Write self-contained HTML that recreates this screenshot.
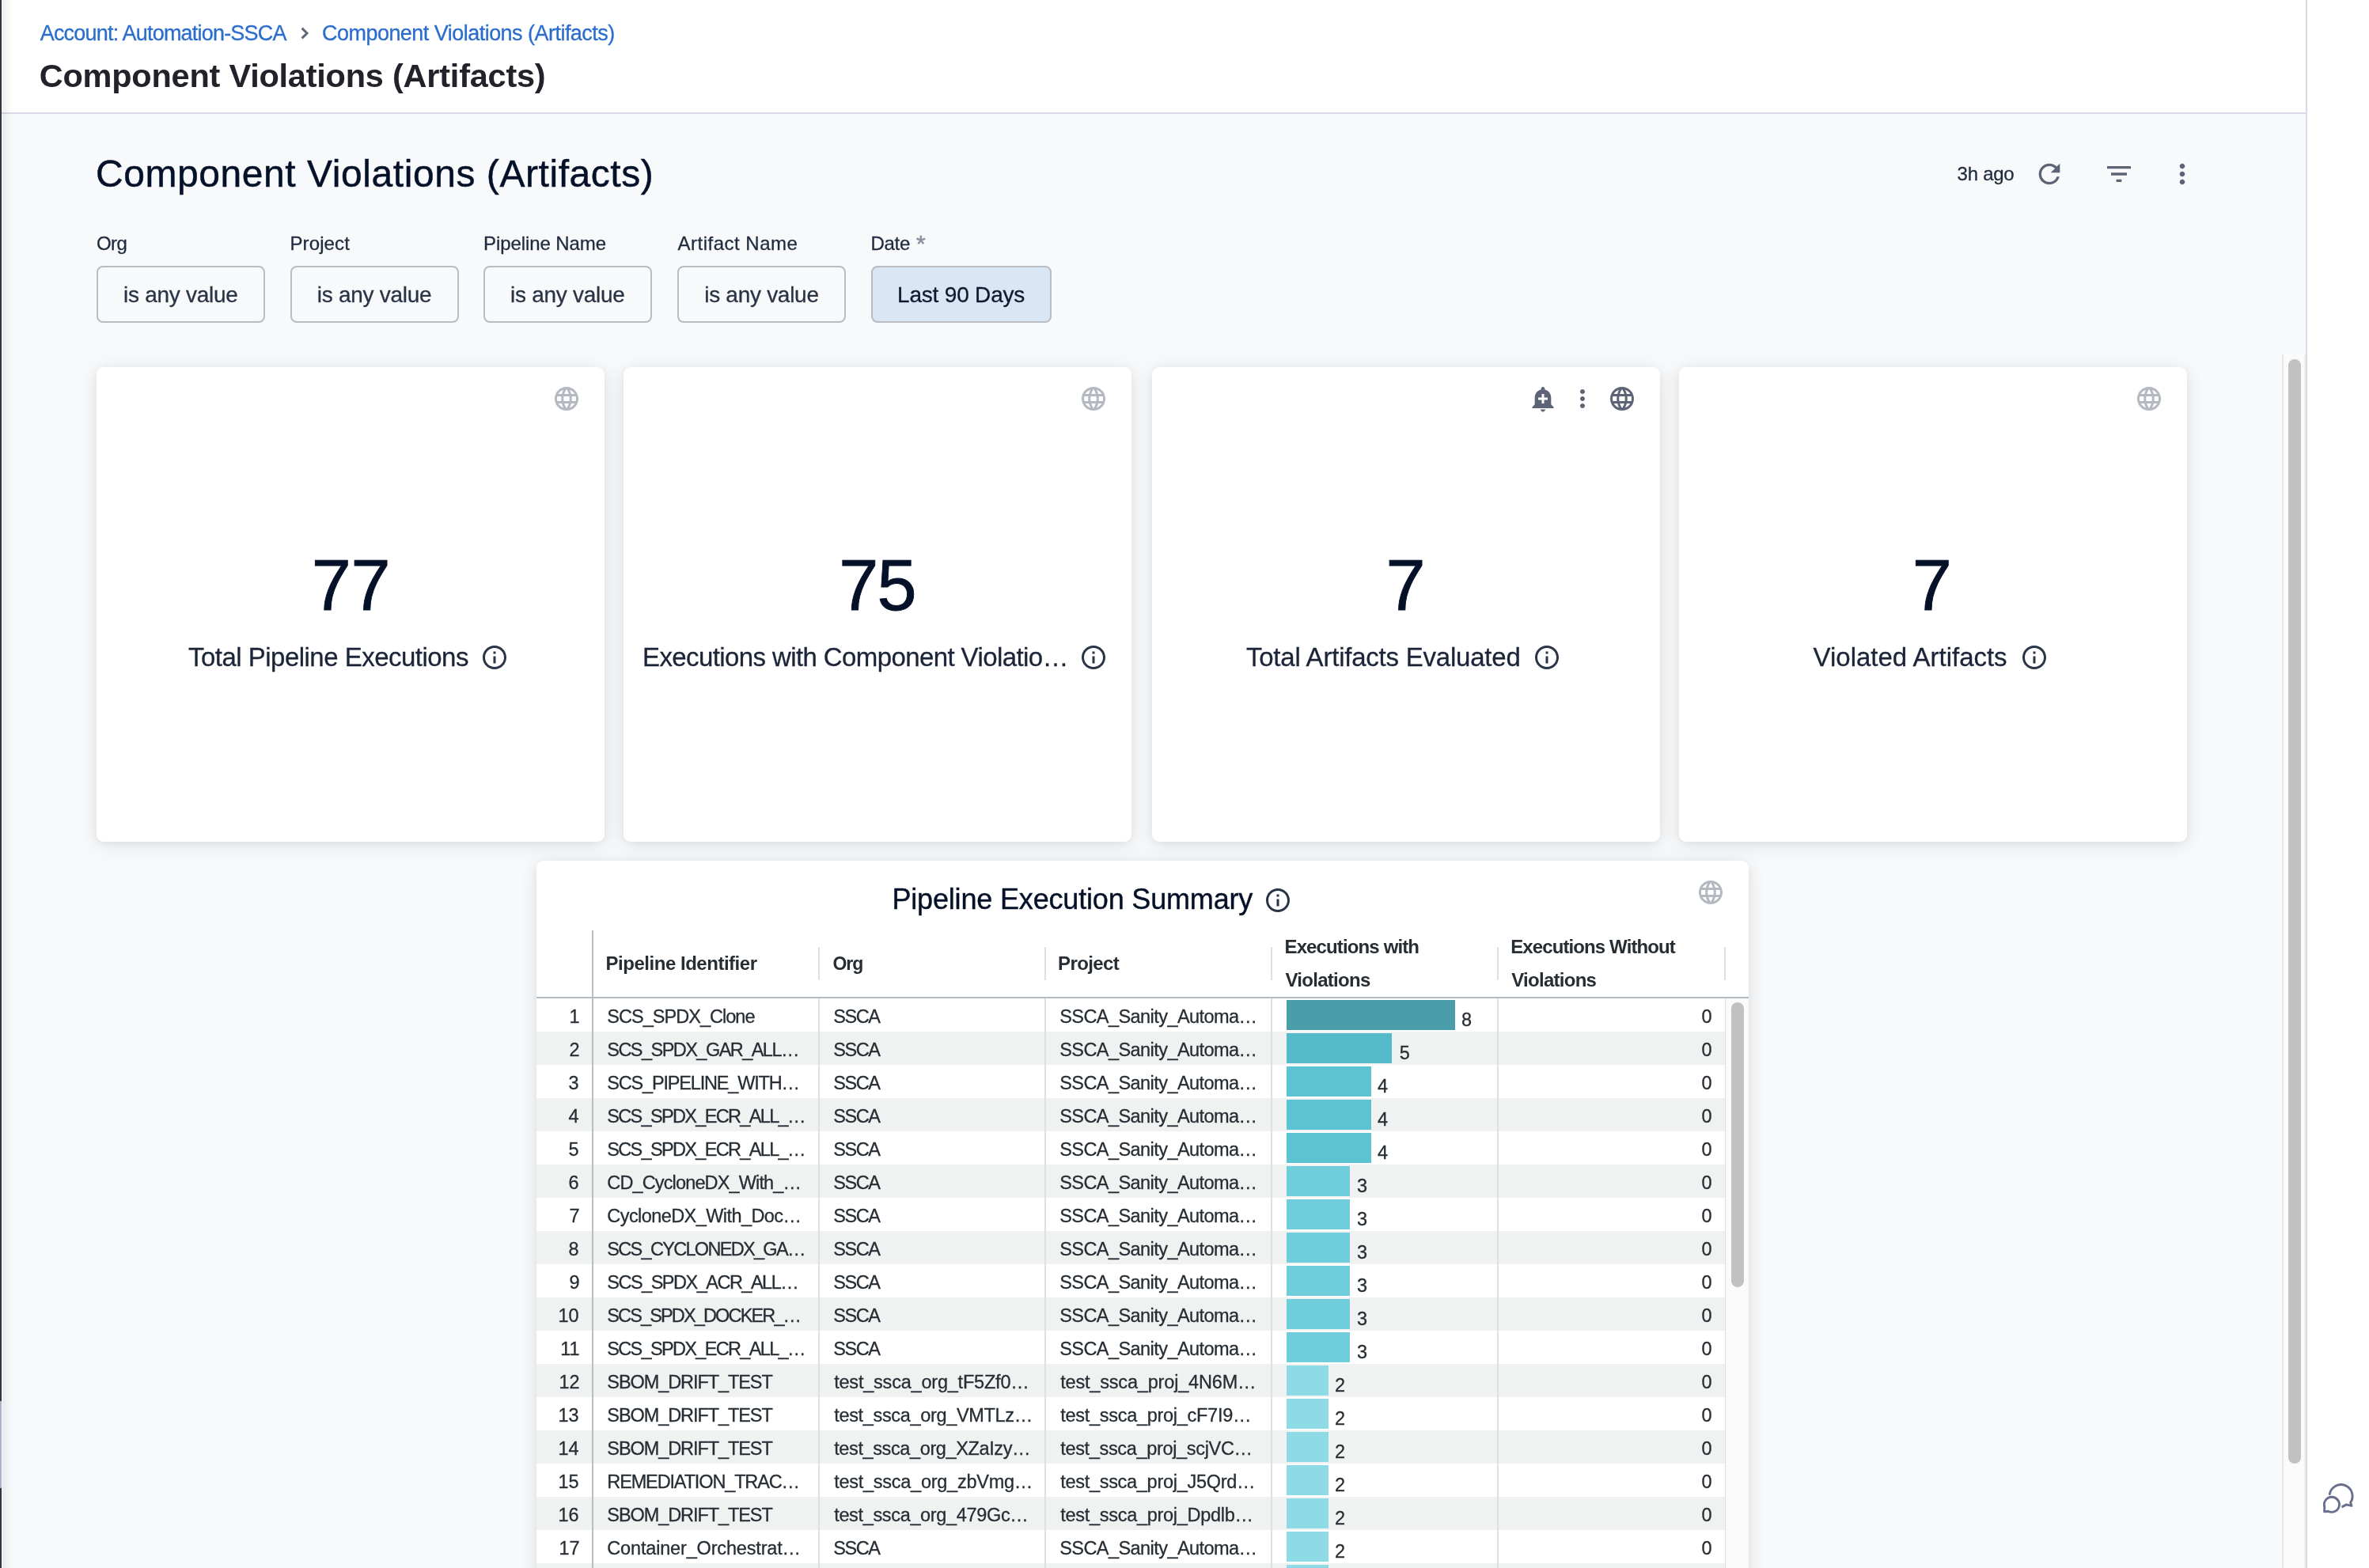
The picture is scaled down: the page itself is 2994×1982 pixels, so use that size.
<!DOCTYPE html>
<html lang="en"><head><meta charset="utf-8"><title>Component Violations (Artifacts)</title>
<style>
html,body{margin:0;padding:0}
body{width:2994px;height:1982px;overflow:hidden;background:#fff;position:relative;font-family:"Liberation Sans",sans-serif}
div,span,svg{position:absolute;box-sizing:border-box}
.t{white-space:nowrap;line-height:1;-webkit-text-stroke:.3px}
.card{background:#fff;border-radius:9px;box-shadow:0 4px 24px rgba(0,0,0,.10),0 2px 8px rgba(0,0,0,.045)}
.btn{top:336px;height:72px;border:2px solid #b9bcc1;border-radius:8px}
.row{left:678px;width:1502px;height:42px;background:#f0f2f2}
.bar{height:38px;left:1626px}
.vl{width:2px;background:#dcdfe4}
</style></head><body>

<div style="left:0;top:0;width:2916px;height:1982px;background:#f8f9fb"></div>
<div style="left:0;top:0;width:2916px;height:142px;background:#fff"></div>
<div style="left:0;top:142px;width:2916px;height:2px;background:#d9dae6"></div>
<div style="left:3px;top:0;width:13px;height:1982px;background:linear-gradient(90deg,rgba(20,20,45,.065),rgba(20,20,45,0))"></div>
<div style="left:0;top:0;width:1px;height:1982px;background:#383947"></div>
<div style="left:1px;top:0;width:1px;height:1982px;background:#2b2b38"></div>
<div style="left:0;top:1771px;width:2px;height:110px;background:#b0afc6"></div>
<div style="left:2914px;top:0;width:2px;height:1982px;background:#d9dae6"></div>
<div style="left:2916px;top:0;width:78px;height:1982px;background:#fff"></div>
<svg class="i" style="left:370px;top:30px" width="24" height="24" viewBox="370 30 24 24"><path d="M381.6 35.6L388 42L381.6 48.4" fill="none" stroke="#5c6a7c" stroke-width="3"/></svg>
<div style="left:2884px;top:448px;width:30px;height:1534px;background:#fafafa;border-left:2px solid #e8e8e8;border-right:2px solid #efefef"></div>
<div style="left:2892px;top:454px;width:16px;height:1396px;background:#c1c1c1;border-radius:8px"></div>
<div class="btn" style="left:122px;width:213px"></div>
<div class="btn" style="left:367px;width:213px"></div>
<div class="btn" style="left:611px;width:213px"></div>
<div class="btn" style="left:856px;width:213px"></div>
<div class="btn" style="left:1101px;width:228px;background:#d9e6f4"></div>
<div class="card" style="left:122px;top:464px;width:642px;height:600px"></div>
<div class="card" style="left:788px;top:464px;width:642px;height:600px"></div>
<div class="card" style="left:1456px;top:464px;width:642px;height:600px"></div>
<div class="card" style="left:2122px;top:464px;width:642px;height:600px"></div>
<div class="card" style="left:678px;top:1088px;width:1532px;height:920px"></div>
<div class="row" style="top:1304px"></div>
<div class="row" style="top:1388px"></div>
<div class="row" style="top:1472px"></div>
<div class="row" style="top:1556px"></div>
<div class="row" style="top:1640px"></div>
<div class="row" style="top:1724px"></div>
<div class="row" style="top:1808px"></div>
<div class="row" style="top:1892px"></div>
<div class="row" style="top:1976px"></div>
<div class="bar" style="top:1264px;width:213px;background:#4a9ea9"></div>
<div class="bar" style="top:1306px;width:133px;background:#55bac9"></div>
<div class="bar" style="top:1348px;width:107px;background:#5bc3d2"></div>
<div class="bar" style="top:1390px;width:107px;background:#5bc3d2"></div>
<div class="bar" style="top:1432px;width:107px;background:#5bc3d2"></div>
<div class="bar" style="top:1474px;width:80px;background:#70cedc"></div>
<div class="bar" style="top:1516px;width:80px;background:#70cedc"></div>
<div class="bar" style="top:1558px;width:80px;background:#70cedc"></div>
<div class="bar" style="top:1600px;width:80px;background:#70cedc"></div>
<div class="bar" style="top:1642px;width:80px;background:#70cedc"></div>
<div class="bar" style="top:1684px;width:80px;background:#70cedc"></div>
<div class="bar" style="top:1726px;width:53px;background:#8fdbe5"></div>
<div class="bar" style="top:1768px;width:53px;background:#8fdbe5"></div>
<div class="bar" style="top:1810px;width:53px;background:#8fdbe5"></div>
<div class="bar" style="top:1852px;width:53px;background:#8fdbe5"></div>
<div class="bar" style="top:1894px;width:53px;background:#8fdbe5"></div>
<div class="bar" style="top:1936px;width:53px;background:#8fdbe5"></div>
<div class="bar" style="top:1978px;width:53px;background:#8fdbe5"></div>
<div style="left:748px;top:1176px;width:2px;height:806px;background:#b9bec5"></div>
<div class="vl" style="left:1034px;top:1197px;height:42px"></div>
<div class="vl" style="left:1034px;top:1262px;height:720px"></div>
<div class="vl" style="left:1320px;top:1197px;height:42px"></div>
<div class="vl" style="left:1320px;top:1262px;height:720px"></div>
<div class="vl" style="left:1606px;top:1197px;height:42px"></div>
<div class="vl" style="left:1606px;top:1262px;height:720px"></div>
<div class="vl" style="left:1892px;top:1197px;height:42px"></div>
<div class="vl" style="left:1892px;top:1262px;height:720px"></div>
<div class="vl" style="left:2179px;top:1197px;height:42px"></div>
<div class="vl" style="left:2180px;top:1262px;height:720px"></div>
<div style="left:678px;top:1260px;width:1532px;height:2px;background:#b3bac2"></div>
<div style="left:2181px;top:1262px;width:29px;height:720px;background:#fafafa"></div>
<div style="left:2188px;top:1267px;width:16px;height:360px;background:#c1c1c1;border-radius:8px"></div>
<svg class="i" style="left:2924px;top:1860px" width="64" height="70" viewBox="0 0 64 70" fill="none" stroke="#6a6f8d" stroke-width="2.9" stroke-linecap="round" stroke-linejoin="round"><path d="M20.3 28.6A14.5 14.5 0 1 1 46.6 39.2L48 43.4L41.4 41.9L36.6 44.4"/><path d="M13.8 44.6A9.55 9.55 0 1 1 18.4 50.2L13.6 50.9Z"/></svg>
<svg class="i" style="left:2570.1px;top:199.9px" width="40" height="40" viewBox="0 0 24 24"><path fill="#5c6475" d="M17.65 6.35A7.958 7.958 0 0 0 12 4c-4.42 0-7.99 3.58-7.99 8s3.57 8 7.99 8c3.73 0 6.84-2.55 7.73-6h-2.08A5.99 5.99 0 0 1 12 18c-3.31 0-6-2.69-6-6s2.69-6 6-6c1.66 0 3.14.69 4.22 1.78L13 11h7V4l-2.35 2.35z"/></svg>
<svg class="i" style="left:2658.0px;top:199.9px" width="40" height="40" viewBox="0 0 24 24"><path fill="#5c6475" d="M10 18h4v-2h-4v2zM3 6v2h18V6H3zm3 7h12v-2H6v2z"/></svg>
<svg class="i" style="left:2738.0px;top:199.9px" width="40" height="40" viewBox="0 0 24 24"><path fill="#5c6475" d="M12 8c1.1 0 2-.9 2-2s-.9-2-2-2-2 .9-2 2 .9 2 2 2zm0 2c-1.1 0-2 .9-2 2s.9 2 2 2 2-.9 2-2-.9-2-2-2zm0 6c-1.1 0-2 .9-2 2s.9 2 2 2 2-.9 2-2-.9-2-2-2z"/></svg>
<svg class="i" style="left:698.0px;top:485.8px" width="36" height="36" viewBox="0 0 24 24"><path fill="#b3b8c1" d="M11.99 2C6.47 2 2 6.48 2 12s4.47 10 9.99 10C17.52 22 22 17.52 22 12S17.52 2 11.99 2zm6.93 6h-2.95c-.32-1.25-.78-2.45-1.38-3.56 1.84.63 3.37 1.91 4.33 3.56zM12 4.04c.83 1.2 1.48 2.53 1.91 3.96h-3.82c.43-1.43 1.08-2.76 1.91-3.96zM4.26 14C4.1 13.36 4 12.69 4 12s.1-1.36.26-2h3.38c-.08.66-.14 1.32-.14 2 0 .68.06 1.34.14 2H4.26zm.82 2h2.95c.32 1.25.78 2.45 1.38 3.56-1.84-.63-3.37-1.9-4.33-3.56zm2.95-8H5.08c.96-1.66 2.49-2.93 4.33-3.56C8.81 5.55 8.35 6.75 8.03 8zM12 19.96c-.83-1.2-1.48-2.53-1.91-3.96h3.82c-.43 1.43-1.08 2.76-1.91 3.96zM14.34 14H9.66c-.09-.66-.16-1.32-.16-2 0-.68.07-1.35.16-2h4.68c.09.65.16 1.32.16 2 0 .68-.07 1.34-.16 2zm.25 5.56c.6-1.11 1.06-2.31 1.38-3.56h2.95c-.96 1.65-2.49 2.93-4.33 3.56zM16.36 14c.08-.66.14-1.32.14-2 0-.68-.06-1.34-.14-2h3.38c.16.64.26 1.31.26 2s-.1 1.36-.26 2h-3.38z"/></svg>
<svg class="i" style="left:1364.0px;top:485.8px" width="36" height="36" viewBox="0 0 24 24"><path fill="#b3b8c1" d="M11.99 2C6.47 2 2 6.48 2 12s4.47 10 9.99 10C17.52 22 22 17.52 22 12S17.52 2 11.99 2zm6.93 6h-2.95c-.32-1.25-.78-2.45-1.38-3.56 1.84.63 3.37 1.91 4.33 3.56zM12 4.04c.83 1.2 1.48 2.53 1.91 3.96h-3.82c.43-1.43 1.08-2.76 1.91-3.96zM4.26 14C4.1 13.36 4 12.69 4 12s.1-1.36.26-2h3.38c-.08.66-.14 1.32-.14 2 0 .68.06 1.34.14 2H4.26zm.82 2h2.95c.32 1.25.78 2.45 1.38 3.56-1.84-.63-3.37-1.9-4.33-3.56zm2.95-8H5.08c.96-1.66 2.49-2.93 4.33-3.56C8.81 5.55 8.35 6.75 8.03 8zM12 19.96c-.83-1.2-1.48-2.53-1.91-3.96h3.82c-.43 1.43-1.08 2.76-1.91 3.96zM14.34 14H9.66c-.09-.66-.16-1.32-.16-2 0-.68.07-1.35.16-2h4.68c.09.65.16 1.32.16 2 0 .68-.07 1.34-.16 2zm.25 5.56c.6-1.11 1.06-2.31 1.38-3.56h2.95c-.96 1.65-2.49 2.93-4.33 3.56zM16.36 14c.08-.66.14-1.32.14-2 0-.68-.06-1.34-.14-2h3.38c.16.64.26 1.31.26 2s-.1 1.36-.26 2h-3.38z"/></svg>
<svg class="i" style="left:1931.8px;top:486.0px" width="36" height="36" viewBox="0 0 24 24"><path fill="#5c6475" d="M10.01 21.01c0 1.1.89 1.99 1.99 1.99s1.99-.89 1.99-1.99h-3.98zm8.87-4.19V11c0-3.25-2.25-5.97-5.29-6.69v-.72C13.59 2.71 12.88 2 12 2s-1.59.71-1.59 1.59v.72C7.37 5.03 5.12 7.75 5.12 11v5.82L3 18.94V20h18v-1.06l-2.12-2.12zM16 13.01h-3v3h-2v-3H8V11h3V8h2v3h3v2.01z"/></svg>
<svg class="i" style="left:1982.0px;top:486.0px" width="36" height="36" viewBox="0 0 24 24"><path fill="#5c6475" d="M12 8c1.1 0 2-.9 2-2s-.9-2-2-2-2 .9-2 2 .9 2 2 2zm0 2c-1.1 0-2 .9-2 2s.9 2 2 2 2-.9 2-2-.9-2-2-2zm0 6c-1.1 0-2 .9-2 2s.9 2 2 2 2-.9 2-2-.9-2-2-2z"/></svg>
<svg class="i" style="left:2031.9px;top:485.9px" width="36" height="36" viewBox="0 0 24 24"><path fill="#5c6475" d="M11.99 2C6.47 2 2 6.48 2 12s4.47 10 9.99 10C17.52 22 22 17.52 22 12S17.52 2 11.99 2zm6.93 6h-2.95c-.32-1.25-.78-2.45-1.38-3.56 1.84.63 3.37 1.91 4.33 3.56zM12 4.04c.83 1.2 1.48 2.53 1.91 3.96h-3.82c.43-1.43 1.08-2.76 1.91-3.96zM4.26 14C4.1 13.36 4 12.69 4 12s.1-1.36.26-2h3.38c-.08.66-.14 1.32-.14 2 0 .68.06 1.34.14 2H4.26zm.82 2h2.95c.32 1.25.78 2.45 1.38 3.56-1.84-.63-3.37-1.9-4.33-3.56zm2.95-8H5.08c.96-1.66 2.49-2.93 4.33-3.56C8.81 5.55 8.35 6.75 8.03 8zM12 19.96c-.83-1.2-1.48-2.53-1.91-3.96h3.82c-.43 1.43-1.08 2.76-1.91 3.96zM14.34 14H9.66c-.09-.66-.16-1.32-.16-2 0-.68.07-1.35.16-2h4.68c.09.65.16 1.32.16 2 0 .68-.07 1.34-.16 2zm.25 5.56c.6-1.11 1.06-2.31 1.38-3.56h2.95c-.96 1.65-2.49 2.93-4.33 3.56zM16.36 14c.08-.66.14-1.32.14-2 0-.68-.06-1.34-.14-2h3.38c.16.64.26 1.31.26 2s-.1 1.36-.26 2h-3.38z"/></svg>
<svg class="i" style="left:2697.8px;top:485.9px" width="36" height="36" viewBox="0 0 24 24"><path fill="#b3b8c1" d="M11.99 2C6.47 2 2 6.48 2 12s4.47 10 9.99 10C17.52 22 22 17.52 22 12S17.52 2 11.99 2zm6.93 6h-2.95c-.32-1.25-.78-2.45-1.38-3.56 1.84.63 3.37 1.91 4.33 3.56zM12 4.04c.83 1.2 1.48 2.53 1.91 3.96h-3.82c.43-1.43 1.08-2.76 1.91-3.96zM4.26 14C4.1 13.36 4 12.69 4 12s.1-1.36.26-2h3.38c-.08.66-.14 1.32-.14 2 0 .68.06 1.34.14 2H4.26zm.82 2h2.95c.32 1.25.78 2.45 1.38 3.56-1.84-.63-3.37-1.9-4.33-3.56zm2.95-8H5.08c.96-1.66 2.49-2.93 4.33-3.56C8.81 5.55 8.35 6.75 8.03 8zM12 19.96c-.83-1.2-1.48-2.53-1.91-3.96h3.82c-.43 1.43-1.08 2.76-1.91 3.96zM14.34 14H9.66c-.09-.66-.16-1.32-.16-2 0-.68.07-1.35.16-2h4.68c.09.65.16 1.32.16 2 0 .68-.07 1.34-.16 2zm.25 5.56c.6-1.11 1.06-2.31 1.38-3.56h2.95c-.96 1.65-2.49 2.93-4.33 3.56zM16.36 14c.08-.66.14-1.32.14-2 0-.68-.06-1.34-.14-2h3.38c.16.64.26 1.31.26 2s-.1 1.36-.26 2h-3.38z"/></svg>
<svg class="i" style="left:2143.8px;top:1109.6px" width="36" height="36" viewBox="0 0 24 24"><path fill="#b3b8c1" d="M11.99 2C6.47 2 2 6.48 2 12s4.47 10 9.99 10C17.52 22 22 17.52 22 12S17.52 2 11.99 2zm6.93 6h-2.95c-.32-1.25-.78-2.45-1.38-3.56 1.84.63 3.37 1.91 4.33 3.56zM12 4.04c.83 1.2 1.48 2.53 1.91 3.96h-3.82c.43-1.43 1.08-2.76 1.91-3.96zM4.26 14C4.1 13.36 4 12.69 4 12s.1-1.36.26-2h3.38c-.08.66-.14 1.32-.14 2 0 .68.06 1.34.14 2H4.26zm.82 2h2.95c.32 1.25.78 2.45 1.38 3.56-1.84-.63-3.37-1.9-4.33-3.56zm2.95-8H5.08c.96-1.66 2.49-2.93 4.33-3.56C8.81 5.55 8.35 6.75 8.03 8zM12 19.96c-.83-1.2-1.48-2.53-1.91-3.96h3.82c-.43 1.43-1.08 2.76-1.91 3.96zM14.34 14H9.66c-.09-.66-.16-1.32-.16-2 0-.68.07-1.35.16-2h4.68c.09.65.16 1.32.16 2 0 .68-.07 1.34-.16 2zm.25 5.56c.6-1.11 1.06-2.31 1.38-3.56h2.95c-.96 1.65-2.49 2.93-4.33 3.56zM16.36 14c.08-.66.14-1.32.14-2 0-.68-.06-1.34-.14-2h3.38c.16.64.26 1.31.26 2s-.1 1.36-.26 2h-3.38z"/></svg>
<svg class="i" style="left:606.9px;top:812.9px" width="36" height="36" viewBox="0 0 24 24"><path fill="#2a3447" d="M11 7h2v2h-2zm0 4h2v6h-2zm1-9C6.48 2 2 6.48 2 12s4.48 10 10 10 10-4.48 10-10S17.52 2 12 2zm0 18c-4.41 0-8-3.59-8-8s3.59-8 8-8 8 3.59 8 8-3.59 8-8 8z"/></svg>
<svg class="i" style="left:1364.0px;top:812.9px" width="36" height="36" viewBox="0 0 24 24"><path fill="#2a3447" d="M11 7h2v2h-2zm0 4h2v6h-2zm1-9C6.48 2 2 6.48 2 12s4.48 10 10 10 10-4.48 10-10S17.52 2 12 2zm0 18c-4.41 0-8-3.59-8-8s3.59-8 8-8 8 3.59 8 8-3.59 8-8 8z"/></svg>
<svg class="i" style="left:1936.8px;top:812.9px" width="36" height="36" viewBox="0 0 24 24"><path fill="#2a3447" d="M11 7h2v2h-2zm0 4h2v6h-2zm1-9C6.48 2 2 6.48 2 12s4.48 10 10 10 10-4.48 10-10S17.52 2 12 2zm0 18c-4.41 0-8-3.59-8-8s3.59-8 8-8 8 3.59 8 8-3.59 8-8 8z"/></svg>
<svg class="i" style="left:2552.6px;top:812.9px" width="36" height="36" viewBox="0 0 24 24"><path fill="#2a3447" d="M11 7h2v2h-2zm0 4h2v6h-2zm1-9C6.48 2 2 6.48 2 12s4.48 10 10 10 10-4.48 10-10S17.52 2 12 2zm0 18c-4.41 0-8-3.59-8-8s3.59-8 8-8 8 3.59 8 8-3.59 8-8 8z"/></svg>
<svg class="i" style="left:1597.0px;top:1120.2px" width="36" height="36" viewBox="0 0 24 24"><path fill="#2a3447" d="M11 7h2v2h-2zm0 4h2v6h-2zm1-9C6.48 2 2 6.48 2 12s4.48 10 10 10 10-4.48 10-10S17.52 2 12 2zm0 18c-4.41 0-8-3.59-8-8s3.59-8 8-8 8 3.59 8 8-3.59 8-8 8z"/></svg>
<div style="left:0;top:0;width:2994px;height:1982px;will-change:transform">
<span class="t" style="left:50.7px;top:29px;font-size:27px;color:#2a6dcd;letter-spacing:-0.80px;">Account: Automation-SSCA</span>
<span class="t" style="left:407.0px;top:29px;font-size:27px;color:#2a6dcd;letter-spacing:-0.53px;">Component Violations (Artifacts)</span>
<span class="t" style="left:49.7px;top:75px;font-size:41.5px;color:#22222a;letter-spacing:-0.23px;font-weight:700;-webkit-text-stroke:0;">Component Violations (Artifacts)</span>
<span class="t" style="left:121.0px;top:196px;font-size:48px;color:#051129;letter-spacing:0.56px;-webkit-text-stroke:0.45px;">Component Violations (Artifacts)</span>
<span class="t" style="left:2473.6px;top:208px;font-size:24px;color:#1f2a3c;letter-spacing:-0.27px;">3h ago</span>
<span class="t" style="left:122.0px;top:296px;font-size:24px;color:#1f2a3c;letter-spacing:-0.63px;">Org</span>
<span class="t" style="left:366.5px;top:296px;font-size:24px;color:#1f2a3c;letter-spacing:0.10px;">Project</span>
<span class="t" style="left:611.0px;top:296px;font-size:24px;color:#1f2a3c;letter-spacing:-0.09px;">Pipeline Name</span>
<span class="t" style="left:856.5px;top:296px;font-size:24px;color:#1f2a3c;letter-spacing:0.50px;">Artifact Name</span>
<span class="t" style="left:1100.5px;top:296px;font-size:24px;color:#1f2a3c;letter-spacing:-0.28px;">Date</span>
<span class="t" style="left:1158.0px;top:293px;font-size:30px;color:#8a919d;-webkit-text-stroke:0.6px;">*</span>
<span class="t" style="left:156.0px;top:359px;font-size:28px;color:#2a3344;letter-spacing:-0.28px;">is any value</span>
<span class="t" style="left:400.8px;top:359px;font-size:28px;color:#2a3344;letter-spacing:-0.28px;">is any value</span>
<span class="t" style="left:645.0px;top:359px;font-size:28px;color:#2a3344;letter-spacing:-0.28px;">is any value</span>
<span class="t" style="left:890.2px;top:359px;font-size:28px;color:#2a3344;letter-spacing:-0.28px;">is any value</span>
<span class="t" style="left:1134.0px;top:359px;font-size:28px;color:#0c1a30;letter-spacing:-0.19px;">Last 90 Days</span>
<span class="t" style="left:393.8px;top:695px;font-size:90px;color:#051129;letter-spacing:-0.45px;-webkit-text-stroke:0.9px;">77</span>
<span class="t" style="left:238.0px;top:814px;font-size:33px;color:#1c2538;letter-spacing:-0.52px;">Total Pipeline Executions</span>
<span class="t" style="left:1060.3px;top:695px;font-size:90px;color:#051129;letter-spacing:-1.95px;-webkit-text-stroke:0.9px;">75</span>
<span class="t" style="left:812.0px;top:814px;font-size:33px;color:#1c2538;letter-spacing:-0.60px;">Executions with Component Violatio…</span>
<span class="t" style="left:1751.6px;top:695px;font-size:90px;color:#051129;-webkit-text-stroke:0.9px;">7</span>
<span class="t" style="left:1574.9px;top:814px;font-size:33px;color:#1c2538;letter-spacing:-0.22px;">Total Artifacts Evaluated</span>
<span class="t" style="left:2416.8px;top:695px;font-size:90px;color:#051129;-webkit-text-stroke:0.9px;">7</span>
<span class="t" style="left:2291.6px;top:814px;font-size:33px;color:#1c2538;letter-spacing:-0.01px;">Violated Artifacts</span>
<span class="t" style="left:1127.4px;top:1119px;font-size:36px;color:#051129;letter-spacing:-0.17px;-webkit-text-stroke:0.4px;">Pipeline Execution Summary</span>
<span class="t" style="left:765.6px;top:1206px;font-size:24px;color:#262d33;letter-spacing:-0.48px;font-weight:700;-webkit-text-stroke:0;">Pipeline Identifier</span>
<span class="t" style="left:1052.4px;top:1207px;font-size:23.0px;color:#262d33;letter-spacing:-1.03px;font-weight:700;-webkit-text-stroke:0;">Org</span>
<span class="t" style="left:1337.1px;top:1206px;font-size:24px;color:#262d33;letter-spacing:-0.61px;font-weight:700;-webkit-text-stroke:0;">Project</span>
<span class="t" style="left:1623.5px;top:1185px;font-size:24px;color:#262d33;letter-spacing:-0.87px;font-weight:700;-webkit-text-stroke:0;">Executions with</span>
<span class="t" style="left:1624.5px;top:1227px;font-size:24px;color:#262d33;letter-spacing:-0.72px;font-weight:700;-webkit-text-stroke:0;">Violations</span>
<span class="t" style="left:1909.2px;top:1185px;font-size:24px;color:#262d33;letter-spacing:-0.89px;font-weight:700;-webkit-text-stroke:0;">Executions Without</span>
<span class="t" style="left:1910.2px;top:1227px;font-size:24px;color:#262d33;letter-spacing:-0.72px;font-weight:700;-webkit-text-stroke:0;">Violations</span>
<span class="t" style="left:719.5px;top:1274px;font-size:23.5px;color:#262d33;">1</span>
<span class="t" style="left:767.3px;top:1274px;font-size:23.5px;color:#262d33;letter-spacing:-0.97px;">SCS_SPDX_Clone</span>
<span class="t" style="left:1053.2px;top:1274px;font-size:23.5px;color:#262d33;letter-spacing:-1.44px;">SSCA</span>
<span class="t" style="left:1339.2px;top:1274px;font-size:23.5px;color:#262d33;letter-spacing:-0.56px;">SSCA_Sanity_Automa…</span>
<span class="t" style="left:1847.0px;top:1278px;font-size:23.5px;color:#262d33;">8</span>
<span class="t" style="left:2150.5px;top:1274px;font-size:23.5px;color:#262d33;">0</span>
<span class="t" style="left:719.5px;top:1316px;font-size:23.5px;color:#262d33;">2</span>
<span class="t" style="left:767.3px;top:1316px;font-size:23.5px;color:#262d33;letter-spacing:-1.54px;">SCS_SPDX_GAR_ALL…</span>
<span class="t" style="left:1053.2px;top:1316px;font-size:23.5px;color:#262d33;letter-spacing:-1.44px;">SSCA</span>
<span class="t" style="left:1339.2px;top:1316px;font-size:23.5px;color:#262d33;letter-spacing:-0.56px;">SSCA_Sanity_Automa…</span>
<span class="t" style="left:1768.8px;top:1320px;font-size:23.5px;color:#262d33;">5</span>
<span class="t" style="left:2150.5px;top:1316px;font-size:23.5px;color:#262d33;">0</span>
<span class="t" style="left:718.5px;top:1358px;font-size:23.5px;color:#262d33;">3</span>
<span class="t" style="left:767.3px;top:1358px;font-size:23.5px;color:#262d33;letter-spacing:-1.18px;">SCS_PIPELINE_WITH…</span>
<span class="t" style="left:1053.2px;top:1358px;font-size:23.5px;color:#262d33;letter-spacing:-1.44px;">SSCA</span>
<span class="t" style="left:1339.2px;top:1358px;font-size:23.5px;color:#262d33;letter-spacing:-0.56px;">SSCA_Sanity_Automa…</span>
<span class="t" style="left:1741.0px;top:1362px;font-size:23.5px;color:#262d33;">4</span>
<span class="t" style="left:2150.5px;top:1358px;font-size:23.5px;color:#262d33;">0</span>
<span class="t" style="left:718.5px;top:1400px;font-size:23.5px;color:#262d33;">4</span>
<span class="t" style="left:767.3px;top:1400px;font-size:23.5px;color:#262d33;letter-spacing:-1.67px;">SCS_SPDX_ECR_ALL_…</span>
<span class="t" style="left:1053.2px;top:1400px;font-size:23.5px;color:#262d33;letter-spacing:-1.44px;">SSCA</span>
<span class="t" style="left:1339.2px;top:1400px;font-size:23.5px;color:#262d33;letter-spacing:-0.56px;">SSCA_Sanity_Automa…</span>
<span class="t" style="left:1741.0px;top:1404px;font-size:23.5px;color:#262d33;">4</span>
<span class="t" style="left:2150.5px;top:1400px;font-size:23.5px;color:#262d33;">0</span>
<span class="t" style="left:718.5px;top:1442px;font-size:23.5px;color:#262d33;">5</span>
<span class="t" style="left:767.3px;top:1442px;font-size:23.5px;color:#262d33;letter-spacing:-1.67px;">SCS_SPDX_ECR_ALL_…</span>
<span class="t" style="left:1053.2px;top:1442px;font-size:23.5px;color:#262d33;letter-spacing:-1.44px;">SSCA</span>
<span class="t" style="left:1339.2px;top:1442px;font-size:23.5px;color:#262d33;letter-spacing:-0.56px;">SSCA_Sanity_Automa…</span>
<span class="t" style="left:1741.0px;top:1446px;font-size:23.5px;color:#262d33;">4</span>
<span class="t" style="left:2150.5px;top:1442px;font-size:23.5px;color:#262d33;">0</span>
<span class="t" style="left:718.5px;top:1484px;font-size:23.5px;color:#262d33;">6</span>
<span class="t" style="left:767.3px;top:1484px;font-size:23.5px;color:#262d33;letter-spacing:-0.86px;">CD_CycloneDX_With_…</span>
<span class="t" style="left:1053.2px;top:1484px;font-size:23.5px;color:#262d33;letter-spacing:-1.44px;">SSCA</span>
<span class="t" style="left:1339.2px;top:1484px;font-size:23.5px;color:#262d33;letter-spacing:-0.56px;">SSCA_Sanity_Automa…</span>
<span class="t" style="left:1715.0px;top:1488px;font-size:23.5px;color:#262d33;">3</span>
<span class="t" style="left:2150.5px;top:1484px;font-size:23.5px;color:#262d33;">0</span>
<span class="t" style="left:719.5px;top:1526px;font-size:23.5px;color:#262d33;">7</span>
<span class="t" style="left:767.3px;top:1526px;font-size:23.5px;color:#262d33;letter-spacing:-0.57px;">CycloneDX_With_Doc…</span>
<span class="t" style="left:1053.2px;top:1526px;font-size:23.5px;color:#262d33;letter-spacing:-1.44px;">SSCA</span>
<span class="t" style="left:1339.2px;top:1526px;font-size:23.5px;color:#262d33;letter-spacing:-0.56px;">SSCA_Sanity_Automa…</span>
<span class="t" style="left:1715.0px;top:1530px;font-size:23.5px;color:#262d33;">3</span>
<span class="t" style="left:2150.5px;top:1526px;font-size:23.5px;color:#262d33;">0</span>
<span class="t" style="left:718.5px;top:1568px;font-size:23.5px;color:#262d33;">8</span>
<span class="t" style="left:767.3px;top:1568px;font-size:23.5px;color:#262d33;letter-spacing:-1.69px;">SCS_CYCLONEDX_GA…</span>
<span class="t" style="left:1053.2px;top:1568px;font-size:23.5px;color:#262d33;letter-spacing:-1.44px;">SSCA</span>
<span class="t" style="left:1339.2px;top:1568px;font-size:23.5px;color:#262d33;letter-spacing:-0.56px;">SSCA_Sanity_Automa…</span>
<span class="t" style="left:1715.0px;top:1572px;font-size:23.5px;color:#262d33;">3</span>
<span class="t" style="left:2150.5px;top:1568px;font-size:23.5px;color:#262d33;">0</span>
<span class="t" style="left:719.5px;top:1610px;font-size:23.5px;color:#262d33;">9</span>
<span class="t" style="left:767.3px;top:1610px;font-size:23.5px;color:#262d33;letter-spacing:-1.50px;">SCS_SPDX_ACR_ALL…</span>
<span class="t" style="left:1053.2px;top:1610px;font-size:23.5px;color:#262d33;letter-spacing:-1.44px;">SSCA</span>
<span class="t" style="left:1339.2px;top:1610px;font-size:23.5px;color:#262d33;letter-spacing:-0.56px;">SSCA_Sanity_Automa…</span>
<span class="t" style="left:1715.0px;top:1614px;font-size:23.5px;color:#262d33;">3</span>
<span class="t" style="left:2150.5px;top:1610px;font-size:23.5px;color:#262d33;">0</span>
<span class="t" style="left:705.4px;top:1652px;font-size:23.5px;color:#262d33;">10</span>
<span class="t" style="left:767.3px;top:1652px;font-size:23.5px;color:#262d33;letter-spacing:-1.86px;">SCS_SPDX_DOCKER_…</span>
<span class="t" style="left:1053.2px;top:1652px;font-size:23.5px;color:#262d33;letter-spacing:-1.44px;">SSCA</span>
<span class="t" style="left:1339.2px;top:1652px;font-size:23.5px;color:#262d33;letter-spacing:-0.56px;">SSCA_Sanity_Automa…</span>
<span class="t" style="left:1715.0px;top:1656px;font-size:23.5px;color:#262d33;">3</span>
<span class="t" style="left:2150.5px;top:1652px;font-size:23.5px;color:#262d33;">0</span>
<span class="t" style="left:708.2px;top:1694px;font-size:23.5px;color:#262d33;">11</span>
<span class="t" style="left:767.3px;top:1694px;font-size:23.5px;color:#262d33;letter-spacing:-1.67px;">SCS_SPDX_ECR_ALL_…</span>
<span class="t" style="left:1053.2px;top:1694px;font-size:23.5px;color:#262d33;letter-spacing:-1.44px;">SSCA</span>
<span class="t" style="left:1339.2px;top:1694px;font-size:23.5px;color:#262d33;letter-spacing:-0.56px;">SSCA_Sanity_Automa…</span>
<span class="t" style="left:1715.0px;top:1698px;font-size:23.5px;color:#262d33;">3</span>
<span class="t" style="left:2150.5px;top:1694px;font-size:23.5px;color:#262d33;">0</span>
<span class="t" style="left:706.4px;top:1736px;font-size:23.5px;color:#262d33;">12</span>
<span class="t" style="left:767.3px;top:1736px;font-size:23.5px;color:#262d33;letter-spacing:-1.08px;">SBOM_DRIFT_TEST</span>
<span class="t" style="left:1054.2px;top:1736px;font-size:23.5px;color:#262d33;letter-spacing:-0.21px;">test_ssca_org_tF5Zf0…</span>
<span class="t" style="left:1340.2px;top:1736px;font-size:23.5px;color:#262d33;letter-spacing:-0.18px;">test_ssca_proj_4N6M…</span>
<span class="t" style="left:1687.0px;top:1740px;font-size:23.5px;color:#262d33;">2</span>
<span class="t" style="left:2150.5px;top:1736px;font-size:23.5px;color:#262d33;">0</span>
<span class="t" style="left:705.4px;top:1778px;font-size:23.5px;color:#262d33;">13</span>
<span class="t" style="left:767.3px;top:1778px;font-size:23.5px;color:#262d33;letter-spacing:-1.08px;">SBOM_DRIFT_TEST</span>
<span class="t" style="left:1054.2px;top:1778px;font-size:23.5px;color:#262d33;letter-spacing:-0.33px;">test_ssca_org_VMTLz…</span>
<span class="t" style="left:1340.2px;top:1778px;font-size:23.5px;color:#262d33;letter-spacing:-0.28px;">test_ssca_proj_cF7I9…</span>
<span class="t" style="left:1687.0px;top:1782px;font-size:23.5px;color:#262d33;">2</span>
<span class="t" style="left:2150.5px;top:1778px;font-size:23.5px;color:#262d33;">0</span>
<span class="t" style="left:705.4px;top:1820px;font-size:23.5px;color:#262d33;">14</span>
<span class="t" style="left:767.3px;top:1820px;font-size:23.5px;color:#262d33;letter-spacing:-1.08px;">SBOM_DRIFT_TEST</span>
<span class="t" style="left:1054.2px;top:1820px;font-size:23.5px;color:#262d33;letter-spacing:-0.38px;">test_ssca_org_XZaIzy…</span>
<span class="t" style="left:1340.2px;top:1820px;font-size:23.5px;color:#262d33;letter-spacing:-0.33px;">test_ssca_proj_scjVC…</span>
<span class="t" style="left:1687.0px;top:1824px;font-size:23.5px;color:#262d33;">2</span>
<span class="t" style="left:2150.5px;top:1820px;font-size:23.5px;color:#262d33;">0</span>
<span class="t" style="left:705.4px;top:1862px;font-size:23.5px;color:#262d33;">15</span>
<span class="t" style="left:767.3px;top:1862px;font-size:23.5px;color:#262d33;letter-spacing:-1.14px;">REMEDIATION_TRAC…</span>
<span class="t" style="left:1054.2px;top:1862px;font-size:23.5px;color:#262d33;letter-spacing:-0.26px;">test_ssca_org_zbVmg…</span>
<span class="t" style="left:1340.2px;top:1862px;font-size:23.5px;color:#262d33;letter-spacing:-0.29px;">test_ssca_proj_J5Qrd…</span>
<span class="t" style="left:1687.0px;top:1866px;font-size:23.5px;color:#262d33;">2</span>
<span class="t" style="left:2150.5px;top:1862px;font-size:23.5px;color:#262d33;">0</span>
<span class="t" style="left:705.4px;top:1904px;font-size:23.5px;color:#262d33;">16</span>
<span class="t" style="left:767.3px;top:1904px;font-size:23.5px;color:#262d33;letter-spacing:-1.08px;">SBOM_DRIFT_TEST</span>
<span class="t" style="left:1054.2px;top:1904px;font-size:23.5px;color:#262d33;letter-spacing:-0.34px;">test_ssca_org_479Gc…</span>
<span class="t" style="left:1340.2px;top:1904px;font-size:23.5px;color:#262d33;letter-spacing:-0.28px;">test_ssca_proj_Dpdlb…</span>
<span class="t" style="left:1687.0px;top:1908px;font-size:23.5px;color:#262d33;">2</span>
<span class="t" style="left:2150.5px;top:1904px;font-size:23.5px;color:#262d33;">0</span>
<span class="t" style="left:706.4px;top:1946px;font-size:23.5px;color:#262d33;">17</span>
<span class="t" style="left:767.3px;top:1946px;font-size:23.5px;color:#262d33;letter-spacing:-0.17px;">Container_Orchestrat…</span>
<span class="t" style="left:1053.2px;top:1946px;font-size:23.5px;color:#262d33;letter-spacing:-1.44px;">SSCA</span>
<span class="t" style="left:1339.2px;top:1946px;font-size:23.5px;color:#262d33;letter-spacing:-0.56px;">SSCA_Sanity_Automa…</span>
<span class="t" style="left:1687.0px;top:1950px;font-size:23.5px;color:#262d33;">2</span>
<span class="t" style="left:2150.5px;top:1946px;font-size:23.5px;color:#262d33;">0</span>
</div>
</body></html>
